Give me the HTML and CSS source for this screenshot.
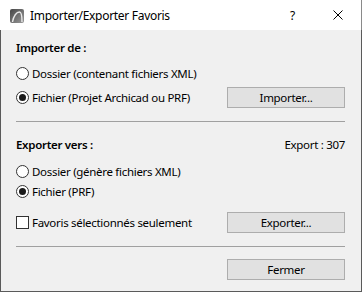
FILE: index.html
```html
<!DOCTYPE html>
<html lang="fr">
<head>
    <meta charset="UTF-8">
    <meta name="viewport" content="width=device-width, initial-scale=1.0">
    <title>Importer/Exporter Favoris</title>
    <link rel="stylesheet" href="styles.css">
</head>
<body>

<div class="window">
    <div class="titlebar">
        <svg class="app-icon" width="14" height="14" viewBox="0 0 14 14">
            <defs>
                <linearGradient id="ig" x1="0" y1="0" x2="1" y2="1">
                    <stop offset="0" stop-color="#454545"/>
                    <stop offset="1" stop-color="#9a9a9a"/>
                </linearGradient>
            </defs>
            <rect x="0" y="0" width="14" height="14" rx="2" fill="url(#ig)"/>
            <path d="M2.5 13 C3.5 7 6.5 3 9.5 3 C11 3 12 5 12 13" fill="none" stroke="#e8e8e8" stroke-width="1.4"/>
        </svg>
        <span class="title">Importer/Exporter Favoris</span>
        <span class="help">?</span>
        <svg class="close" width="10" height="10" viewBox="0 0 10 10">
            <path d="M0.5 0.5 L9.5 9.5 M9.5 0.5 L0.5 9.5" stroke="#000" stroke-width="1"/>
        </svg>
    </div>

    <div class="content">
        <div class="row heading-row">
            <span class="heading">Importer de :</span>
        </div>
        <div class="row row-1">
            <span class="option"><span class="radio"></span>Dossier (contenant fichiers XML)</span>
        </div>
        <div class="row row-btn">
            <span class="option"><span class="radio checked"></span>Fichier (Projet Archicad ou PRF)</span>
            <button class="btn">Importer...</button>
        </div>

        <div class="sep sep-1"></div>

        <div class="row heading-row heading-2">
            <span class="heading">Exporter vers :</span>
            <span class="count">Export : 307</span>
        </div>
        <div class="row row-3">
            <span class="option"><span class="radio"></span>Dossier (génère fichiers XML)</span>
        </div>
        <div class="row">
            <span class="option"><span class="radio checked"></span>Fichier (PRF)</span>
        </div>
        <div class="row row-btn row-5">
            <span class="option"><span class="checkbox"></span>Favoris sélectionnés seulement</span>
            <button class="btn">Exporter...</button>
        </div>

        <div class="sep sep-2"></div>

        <div class="row row-btn row-close">
            <button class="btn">Fermer</button>
        </div>
    </div>
</div>

</body>
</html>
```

FILE: styles.css
```css
* {
    box-sizing: border-box;
    margin: 0;
    padding: 0;
}

body {
    font-family: 'Noto Sans', 'Open Sans', sans-serif;
    font-size: 11.5px;
    letter-spacing: -0.3px;
    color: #000;
    background-color: #fff;
    width: 362px;
    height: 292px;
    overflow: hidden;
}

.window {
    width: 362px;
    height: 292px;
    display: flex;
    flex-direction: column;
}

.titlebar {
    height: 30px;
    background-color: #fff;
    display: flex;
    align-items: center;
    border-right: 1px solid #8a8a8a;
}

.app-icon {
    margin-left: 10px;
    margin-top: 1px;
}

.title {
    margin-left: 6px;
    flex: 1;
    font-size: 12px;
}

.help {
    width: 20px;
    margin-right: 23px;
    font-size: 12px;
}

.close {
    margin-right: 18px;
}

.content {
    flex: 1;
    background-color: #f0f0f0;
    border-left: 1px solid #5a5a5a;
    border-right: 1px solid #5a5a5a;
    border-bottom: 1px solid #5a5a5a;
    padding: 7px 16px 0 15px;
    display: flex;
    flex-direction: column;
}

.row {
    height: 20px;
    display: flex;
    align-items: center;
    justify-content: space-between;
}

.heading {
    font-weight: 600;
}

.row-1 {
    margin-top: 6px;
}

.row-btn {
    height: 21px;
    margin-top: 4px;
}

.heading-2 {
    margin-top: 12px;
}

.row-3 {
    margin-top: 7px;
}

.row-5 {
    margin-top: 11px;
}

.row-close {
    margin-top: 12px;
    justify-content: flex-end;
}

.sep {
    height: 1px;
    background-color: #a0a0a0;
    margin-top: 13px;
}

.sep-2 {
    margin-top: 13px;
}

.option {
    display: flex;
    align-items: center;
}

.radio {
    width: 13px;
    height: 13px;
    border: 1px solid #333;
    border-radius: 50%;
    background-color: #fff;
    margin-right: 3px;
    display: flex;
    align-items: center;
    justify-content: center;
}

.radio.checked::after {
    content: '';
    width: 7px;
    height: 7px;
    border-radius: 50%;
    background-color: #1a1a1a;
}

.checkbox {
    width: 13px;
    height: 13px;
    border: 1px solid #333;
    background-color: #fff;
    margin-right: 3px;
}

.btn {
    width: 118px;
    height: 21px;
    font-family: inherit;
    font-size: 11.5px;
    letter-spacing: -0.3px;
    color: #000;
    background-color: #e1e1e1;
    border: 1px solid #adadad;
}
```
